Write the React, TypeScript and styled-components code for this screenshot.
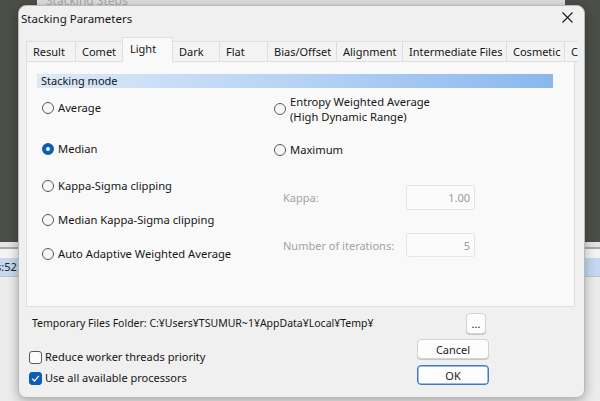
import React from 'react';
import styled, { createGlobalStyle } from 'styled-components';

const Global = createGlobalStyle`
  html, body { margin: 0; padding: 0; }
  body {
    width: 600px;
    height: 401px;
    overflow: hidden;
    font-family: "Noto Sans", "Open Sans", sans-serif;
    font-size: 11px;
    color: #161616;
  }
`;

const Desktop = styled.div`
  position: relative;
  width: 600px;
  height: 401px;
  overflow: hidden;
  background: #4b4f48;
`;

const BackWindowTop = styled.div`
  position: absolute;
  left: 37px;
  top: -20px;
  width: 528px;
  height: 25px;
  background: #dedede;
  display: flex;
  align-items: flex-end;
  padding-left: 9px;
  box-sizing: border-box;
  color: #a9a9a9;
  font-size: 12px;
  line-height: 8px;
  overflow: hidden;
`;

const BackWindowBottom = styled.div`
  position: absolute;
  left: 0;
  top: 242px;
  width: 600px;
  height: 159px;
  background: #ececec;
  display: flex;
  flex-direction: column;
`;

const BackHeader = styled.div`
  height: 5px;
  background: #e4e4e4;
  border-bottom: 2px solid #a7a7a7;
`;

const BackGap = styled.div`
  height: 9px;
  background: #f3f3f3;
`;

const BackRow = styled.div`
  height: 18px;
  background: #c4d9f1;
  border-bottom: 1px solid #c2c2c2;
  font-size: 11px;
  line-height: 18px;
  color: #222;
  text-indent: -4px;
`;

const Dialog = styled.div`
  position: absolute;
  left: 18px;
  top: 5px;
  width: 567px;
  height: 393px;
  box-sizing: border-box;
  background: #f0f0f0;
  border: 1px solid #b9b9b9;
  border-radius: 8px;
  box-shadow: 0 3px 12px rgba(0, 0, 0, 0.3);
  display: flex;
  flex-direction: column;
  overflow: hidden;
`;

const TitleBar = styled.div`
  height: 24px;
  display: flex;
  align-items: center;
  justify-content: space-between;
  padding: 0 11px 0 2px;
  font-size: 11.5px;
`;

const CloseIcon = styled.svg`
  width: 11px;
  height: 11px;
  display: block;
  margin-top: -1px;
`;

const Body = styled.div`
  padding: 0 9px 0 7px;
  display: flex;
  flex-direction: column;
`;

const TabStrip = styled.div`
  margin-top: 7px;
  height: 25px;
  width: 552px;
  display: flex;
  align-items: flex-end;
  overflow: hidden;
  position: relative;
  z-index: 1;
  margin-bottom: -1px;
`;

const Tab = styled.div<{ $active?: boolean; $w: number }>`
  flex: 0 0 auto;
  box-sizing: border-box;
  width: ${(p) => p.$w}px;
  height: ${(p) => (p.$active ? 25 : 21)}px;
  margin-left: -1px;
  padding: 0 0 ${(p) => (p.$active ? 3 : 0)}px ${(p) => (p.$active ? 7 : 6)}px;
  display: flex;
  align-items: center;
  white-space: nowrap;
  overflow: hidden;
  background: ${(p) => (p.$active ? '#f9f9f9' : '#f3f3f3')};
  border: 1px solid #dedede;
  border-bottom: ${(p) => (p.$active ? '1px solid #f9f9f9' : '1px solid #dedede')};
  font-size: 11px;
  line-height: 1;
  &:first-child { margin-left: 0; }
`;

const Panel = styled.div`
  height: 246px;
  box-sizing: border-box;
  width: 549px;
  background: #f9f9f9;
  border: 1px solid #dedede;
  display: flex;
  flex-direction: column;
`;

const SectionHeader = styled.div`
  margin: 12px 21px 0 10px;
  height: 14px;
  line-height: 14px;
  padding-left: 4px;
  background: linear-gradient(to right, #dce9f8 0%, #b6d3f4 50%, #8bb7ee 100%);
  font-size: 11px;
`;

const Columns = styled.div`
  display: grid;
  grid-template-columns: 232px 1fr;
  padding-left: 15px;
`;

const Column = styled.div`
  display: flex;
  flex-direction: column;
  align-items: flex-start;
`;

const Option = styled.label<{ $mt: number }>`
  margin-top: ${(p) => p.$mt}px;
  display: flex;
  align-items: center;
  gap: 4px;
  font-size: 11.2px;
  line-height: 15px;
  white-space: nowrap;
`;

const RadioDot = styled.span<{ $on?: boolean }>`
  flex: 0 0 auto;
  width: 12px;
  height: 12px;
  box-sizing: border-box;
  border-radius: 50%;
  border: ${(p) => (p.$on ? '4px solid #0c5db5' : '1px solid #5a5a5a')};
  background: ${(p) => (p.$on ? '#ffffff' : '#f7f7f7')};
`;

const TwoLine = styled.span`
  display: flex;
  flex-direction: column;
  line-height: 15px;
`;

const FieldRow = styled.div<{ $mt: number }>`
  margin-top: ${(p) => p.$mt}px;
  padding-left: 9px;
  display: flex;
  align-items: center;
`;

const FieldLabel = styled.span`
  width: 123px;
  color: #a2a2a2;
  font-size: 11px;
`;

const FieldInput = styled.div<{ $h: number }>`
  width: 69px;
  height: ${(p) => p.$h}px;
  box-sizing: border-box;
  border: 1px solid #e4e4e4;
  border-radius: 3px;
  background: #fbfbfb;
  color: #9a9a9a;
  font-size: 11px;
  display: flex;
  align-items: center;
  justify-content: flex-end;
  padding-right: 4px;
`;

const TempRow = styled.div`
  margin-top: 6px;
  height: 21px;
  display: flex;
  align-items: center;
  padding-left: 6px;
  font-size: 10.5px;
`;

const TempText = styled.span`
  flex: 1 1 auto;
  white-space: nowrap;
  margin-top: -1px;
`;

const Button = styled.button<{ $w: number; $h: number; $default?: boolean }>`
  width: ${(p) => p.$w}px;
  height: ${(p) => p.$h}px;
  box-sizing: border-box;
  padding: 0;
  background: #fdfdfd;
  border: 1px solid ${(p) => (p.$default ? '#3b7cc4' : '#d3d3d3')};
  box-shadow: ${(p) => (p.$default ? 'inset 0 0 0 0.5px #3b7cc4' : '0 1px 0 #c8c8c8')};
  border-radius: 4px;
  font-family: inherit;
  font-size: 11px;
  color: #1b1b1b;
  display: flex;
  align-items: center;
  justify-content: center;
`;

const EllipsisButton = styled(Button)`
  margin-right: 89px;
  align-items: flex-end;
  padding-bottom: 4px;
  line-height: 1;
`;

const BottomArea = styled.div`
  margin-top: 5px;
  display: flex;
  justify-content: space-between;
  align-items: flex-start;
`;

const Checks = styled.div`
  margin-top: 11px;
  padding-left: 3px;
  display: flex;
  flex-direction: column;
  gap: 7px;
`;

const CheckRow = styled.label`
  display: flex;
  align-items: center;
  gap: 3px;
  font-size: 11px;
  line-height: 14px;
  white-space: nowrap;
`;

const CheckBox = styled.span<{ $on?: boolean }>`
  width: 13px;
  height: 13px;
  box-sizing: border-box;
  border-radius: 3px;
  border: 1px solid ${(p) => (p.$on ? '#0c5db5' : '#5a5a5a')};
  background: ${(p) => (p.$on ? '#0c5db5' : '#fbfbfb')};
  display: flex;
  align-items: center;
  justify-content: center;
`;

const ButtonColumn = styled.div`
  display: flex;
  flex-direction: column;
  gap: 6px;
  margin-right: 86px;
`;

const tabs = [
  { name: 'Result', w: 50 },
  { name: 'Comet', w: 48 },
  { name: 'Light', w: 51, active: true },
  { name: 'Dark', w: 48 },
  { name: 'Flat', w: 49 },
  { name: 'Bias/Offset', w: 70 },
  { name: 'Alignment', w: 67 },
  { name: 'Intermediate Files', w: 105 },
  { name: 'Cosmetic', w: 59 },
  { name: 'C', w: 30 },
];

export default function App() {
  return (
    <Desktop>
      <Global />
      <BackWindowTop>Stacking Steps</BackWindowTop>
      <BackWindowBottom>
        <BackHeader />
        <BackGap />
        <BackRow>s:52</BackRow>
      </BackWindowBottom>
      <Dialog>
        <TitleBar>
          <span>Stacking Parameters</span>
          <CloseIcon viewBox="0 0 11 11">
            <path d="M0.5 0.5 L10.5 10.5 M10.5 0.5 L0.5 10.5" stroke="#1a1a1a" strokeWidth="1.1" fill="none" />
          </CloseIcon>
        </TitleBar>
        <Body>
          <TabStrip>
            {tabs.map((t) => (
              <Tab key={t.name} $w={t.w} $active={t.active}>
                {t.name}
              </Tab>
            ))}
          </TabStrip>
          <Panel>
            <SectionHeader>Stacking mode</SectionHeader>
            <Columns>
              <Column>
                <Option $mt={12}><RadioDot />Average</Option>
                <Option $mt={26}><RadioDot $on />Median</Option>
                <Option $mt={22}><RadioDot />Kappa-Sigma clipping</Option>
                <Option $mt={19}><RadioDot />Median Kappa-Sigma clipping</Option>
                <Option $mt={19}><RadioDot />Auto Adaptive Weighted Average</Option>
              </Column>
              <Column>
                <Option $mt={6}>
                  <RadioDot />
                  <TwoLine>
                    <span>Entropy Weighted Average</span>
                    <span>(High Dynamic Range)</span>
                  </TwoLine>
                </Option>
                <Option $mt={18}><RadioDot />Maximum</Option>
                <FieldRow $mt={28}>
                  <FieldLabel>Kappa:</FieldLabel>
                  <FieldInput $h={25}>1.00</FieldInput>
                </FieldRow>
                <FieldRow $mt={23}>
                  <FieldLabel>Number of iterations:</FieldLabel>
                  <FieldInput $h={24}>5</FieldInput>
                </FieldRow>
              </Column>
            </Columns>
          </Panel>
          <TempRow>
            <TempText>Temporary Files Folder: C:¥Users¥TSUMUR~1¥AppData¥Local¥Temp¥</TempText>
            <EllipsisButton $w={20} $h={21}>...</EllipsisButton>
          </TempRow>
          <BottomArea>
            <Checks>
              <CheckRow><CheckBox />Reduce worker threads priority</CheckRow>
              <CheckRow>
                <CheckBox $on>
                  <svg width="9" height="9" viewBox="0 0 9 9">
                    <path d="M1.2 4.8 L3.5 7 L7.8 1.8" stroke="#fff" strokeWidth="1.2" fill="none" />
                  </svg>
                </CheckBox>
                Use all available processors
              </CheckRow>
            </Checks>
            <ButtonColumn>
              <Button $w={72} $h={20}>Cancel</Button>
              <Button $w={72} $h={20} $default>OK</Button>
            </ButtonColumn>
          </BottomArea>
        </Body>
      </Dialog>
    </Desktop>
  );
}
